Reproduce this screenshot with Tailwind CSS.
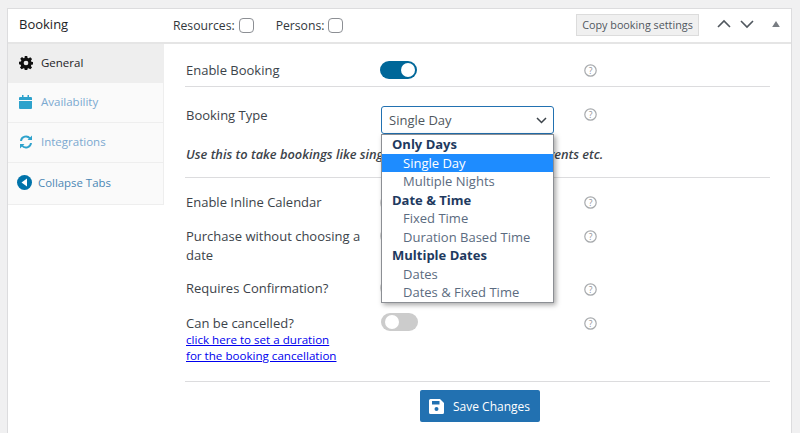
<!DOCTYPE html>
<html><head><meta charset="utf-8"><script src="https://cdn.jsdelivr.net/npm/@tailwindcss/browser@4"></script></head>
<body class="w-[800px] h-[433px] overflow-hidden bg-[#f0f0f1] font-['Open_Sans',sans-serif] text-[13px] text-[#3c434a]">
<div class="ml-[7px] mt-[8px] w-[785px] h-[425px] bg-white border border-[#dcdcde] border-b-0">
  <div class="h-[35px] flex items-center border-b-2 border-[#e5e5e5] relative">
    <div class="w-[165px] pl-[11px] text-[#1d2327] font-normal text-[13px] -mt-[1px]">Booking</div>
    <div class="flex items-center text-[12.2px] text-[#32373c] pt-[1px]"><span>Resources:</span><span class="w-[15px] h-[15px] ml-[4px] rounded-[4px] border border-[#8c8f94] bg-white"></span></div>
    <div class="flex items-center ml-[22px] text-[12.2px] text-[#32373c] pt-[1px]"><span>Persons:</span><span class="w-[15px] h-[15px] ml-[4px] rounded-[4px] border border-[#8c8f94] bg-white"></span></div>
    <div class="ml-auto mr-[92px] -mt-[1px] h-[22px] w-[123px] flex items-center justify-center bg-[#f0f0f0] border border-[#dcdcdc] text-[10.8px] text-[#50575e]">Copy booking settings</div>
    <div class="absolute right-[11px] top-[8px] flex items-center">
      <svg class="w-[14px] h-[14px] mr-[9px]" viewBox="0 0 14 14" fill="none" stroke="#50575e" stroke-width="1.6"><path d="M1 10l6-6 6 6"/></svg>
      <svg class="w-[14px] h-[14px] mr-[18px]" viewBox="0 0 14 14" fill="none" stroke="#50575e" stroke-width="1.6"><path d="M1 4l6 6 6-6"/></svg>
      <svg class="w-[8px] h-[6px]" viewBox="0 0 9 7" fill="#787c82"><path d="M4.5 0L9 7H0z"/></svg>
    </div>
  </div>
  <div class="flex relative">
    <div class="w-[156px] h-[161px] bg-[#fafafa] border-r border-b border-[#eeeeee] shrink-0">
      <div class="h-[39px] bg-[#eeeeee] flex items-center pl-[11px] pb-[2px] text-[#1d2327] text-[11.5px]">
        <svg class="w-[14px] h-[14px] mr-[8px]" viewBox="0 0 16 16" fill="#111"><path d="M6.6 0h2.8l.4 2.2 1.2.5L12.9 1.4l2 2-1.300 1.900.5 1.200 2.200.4v2.800l-2.200.4-.5 1.200 1.300 1.900-2 2-1.900-1.300-1.200.5-.4 2.200H6.600l-.4-2.200-1.200-.5-1.900 1.300-2-2 1.300-1.900-.5-1.200L0 9.400V6.600l2.200-.4.5-1.200L1.400 3.100l2-2L5.300 2.700l1-.5zM8 5.300a2.700 2.700 0 100 5.400 2.700 2.700 0 000-5.400z" fill-rule="evenodd"/></svg>General</div>
      <div class="h-[40px] border-b border-[#eeeeee] flex items-center pl-[11px] pb-[2px] text-[#7aa9d0] text-[11.5px]">
        <svg class="w-[13px] h-[14px] mr-[9px]" viewBox="0 0 13 14" fill="#2ea2cc"><path d="M3 0h1.500v2h4V0H10v2h2a1 1 0 011 1v2H0V3a1 1 0 011-1h2zM0 6h13v7a1 1 0 01-1 1H1a1 1 0 01-1-1z"/></svg>Availability</div>
      <div class="h-[40px] border-b border-[#eeeeee] flex items-center pl-[11px] pb-[2px] text-[#7aa9d0] text-[11.5px]">
        <svg class="w-[14px] h-[14px] mr-[8px]" viewBox="0 0 14 14" fill="none" stroke="#2ea2cc" stroke-width="2"><path d="M2 6a5 5 0 019-2.500M12 8a5 5 0 01-9 2.500"/><path d="M13 .5V5H8.500zM1 13.500V9h4.500z" fill="#2ea2cc" stroke="none"/></svg>Integrations</div>
      <div class="h-[41px] flex items-center pl-[9px] pb-[2px] text-[#4b87b5] text-[11.4px]">
        <svg class="w-[15px] h-[15px] mr-[6px]" viewBox="0 0 15 15"><circle cx="7.500" cy="7.500" r="7.500" fill="#0073aa"/><path d="M10 3.500v8L4.500 7.500z" fill="#fff"/></svg>Collapse Tabs</div>
    </div>
    <div class="w-[585px] ml-[21px]">
      <div class="h-[43px] border-b border-[#dcdcde] flex pt-[17px]">
        <div class="w-[196px] pl-[1px] leading-[18px]">Enable Booking</div>
        <div class="w-[203px]"><div class="w-[37px] h-[18px] -ml-[1px] rounded-full bg-[#006799] flex justify-end items-center pr-[2px]"><span class="w-[14px] h-[14px] rounded-full bg-white"></span></div></div>
        <svg class="w-[13px] h-[13px] mt-[3px]" viewBox="0 0 13 13"><circle cx="6.500" cy="6.500" r="5.700" fill="none" stroke="#a7aaad" stroke-width="1.200"/><text x="6.500" y="9.500" font-size="8.500" text-anchor="middle" fill="#8c8f94" font-family="Open Sans">?</text></svg>
      </div>
      <div class="h-[91px] border-b border-[#dcdcde] relative">
        <div class="flex pt-[19px]">
          <div class="w-[196px] pl-[1px] leading-[18px]">Booking Type</div>
          <div class="w-[203px]"></div>
          <svg class="w-[13px] h-[13px] mt-[2px]" viewBox="0 0 13 13"><circle cx="6.500" cy="6.500" r="5.700" fill="none" stroke="#a7aaad" stroke-width="1.200"/><text x="6.500" y="9.500" font-size="8.500" text-anchor="middle" fill="#8c8f94" font-family="Open Sans">?</text></svg>
        </div>
        <div class="absolute left-[1px] top-[58px] italic font-semibold text-[12.8px] text-[#3c434a] whitespace-nowrap">Use this to take bookings like single day appointments, local events etc.</div>
        <div class="absolute left-[196px] top-[19px] w-[173px] h-[28px] rounded-[3px] border border-[#2271b1] bg-white flex items-center pl-[7px] pt-[2px] text-[#50575e] text-[13px]">Single Day
          <svg class="absolute right-[6px] top-[10px] w-[11px] h-[7px]" viewBox="0 0 11 7" fill="none" stroke="#3c434a" stroke-width="1.500"><path d="M1 1l4.500 4.500L10 1"/></svg>
        </div>
      </div>
      <div class="flex pt-[15px] h-[32px]">
        <div class="w-[196px] pl-[1px] leading-[18px]">Enable Inline Calendar</div>
        <div class="w-[203px] pt-[1px]"><div class="w-[37px] h-[18px] -ml-[1px] rounded-full bg-[#ccc]"></div></div>
        <svg class="w-[13px] h-[13px] mt-[3px]" viewBox="0 0 13 13"><circle cx="6.500" cy="6.500" r="5.700" fill="none" stroke="#a7aaad" stroke-width="1.200"/><text x="6.500" y="9.500" font-size="8.500" text-anchor="middle" fill="#8c8f94" font-family="Open Sans">?</text></svg>
      </div>
      <div class="flex pt-[17px] h-[68px]">
        <div class="w-[196px] pl-[1px] leading-[19px] pr-[20px]">Purchase without choosing a date</div>
        <div class="w-[203px]"><div class="w-[37px] h-[18px] -ml-[1px] rounded-full bg-[#ccc]"></div></div>
        <svg class="w-[13px] h-[13px] mt-[3px]" viewBox="0 0 13 13"><circle cx="6.500" cy="6.500" r="5.700" fill="none" stroke="#a7aaad" stroke-width="1.200"/><text x="6.500" y="9.500" font-size="8.500" text-anchor="middle" fill="#8c8f94" font-family="Open Sans">?</text></svg>
      </div>
      <div class="flex h-[33px] pt-[1px]">
        <div class="w-[196px] pl-[1px] leading-[18px]">Requires Confirmation?</div>
        <div class="w-[203px]"><div class="w-[37px] h-[18px] -ml-[1px] rounded-full bg-[#ccc]"></div></div>
        <svg class="w-[13px] h-[13px] mt-[4px]" viewBox="0 0 13 13"><circle cx="6.500" cy="6.500" r="5.700" fill="none" stroke="#a7aaad" stroke-width="1.200"/><text x="6.500" y="9.500" font-size="8.500" text-anchor="middle" fill="#8c8f94" font-family="Open Sans">?</text></svg>
      </div>
      <div class="flex h-[71px] border-b border-[#dcdcde] pt-[3px]">
        <div class="w-[196px] pl-[1px] leading-[18px]">Can be cancelled?<br><a class="block text-[11.6px] leading-[16px] text-[#0000ee] underline whitespace-nowrap" href="#">click here to set a duration<br>for the booking cancellation</a></div>
        <div class="w-[203px]"><div class="w-[37px] h-[18px] -mt-[1px] rounded-full bg-[#ccc] flex items-center pl-[4px]"><span class="w-[14px] h-[14px] rounded-full bg-white"></span></div></div>
        <svg class="w-[13px] h-[13px] mt-[3px]" viewBox="0 0 13 13"><circle cx="6.500" cy="6.500" r="5.700" fill="none" stroke="#a7aaad" stroke-width="1.200"/><text x="6.500" y="9.500" font-size="8.500" text-anchor="middle" fill="#8c8f94" font-family="Open Sans">?</text></svg>
      </div>
      <div class="pl-[235px] pt-[8px]">
        <div class="w-[120px] h-[32px] rounded-[2px] bg-[#2271b1] text-white flex items-center pl-[9px] pt-[1px] text-[12px]">
          <svg class="w-[15px] h-[15px] mr-[9px]" viewBox="0 0 15 15" fill="#fff"><path fill-rule="evenodd" d="M1.500 0H11l4 4v9.500a1.500 1.500 0 01-1.500 1.500h-12A1.500 1.500 0 010 13.500v-12A1.500 1.500 0 011.500 0zM3 2v3.500h7.500V2zM7.500 8a2 2 0 100 4 2 2 0 000-4z"/></svg>Save Changes</div>
      </div>
    </div>
    <div class="absolute left-[373px] top-[90px] w-[173px] h-[169px] bg-white border border-[#8c8f94] shadow-[2px_2px_5px_rgba(0,0,0,0.35)] text-[13px] leading-[18.500px] text-[#5b6b80]">
      <div class="pl-[10px] font-bold text-[#1e3a5f]">Only Days</div>
      <div class="pl-[21px] bg-[#1e8cff] text-white">Single Day</div>
      <div class="pl-[21px]">Multiple Nights</div>
      <div class="pl-[10px] font-bold text-[#1e3a5f]">Date &amp; Time</div>
      <div class="pl-[21px]">Fixed Time</div>
      <div class="pl-[21px]">Duration Based Time</div>
      <div class="pl-[10px] font-bold text-[#1e3a5f]">Multiple Dates</div>
      <div class="pl-[21px]">Dates</div>
      <div class="pl-[21px]">Dates &amp; Fixed Time</div>
    </div>
  </div>
</div>
</body></html>
